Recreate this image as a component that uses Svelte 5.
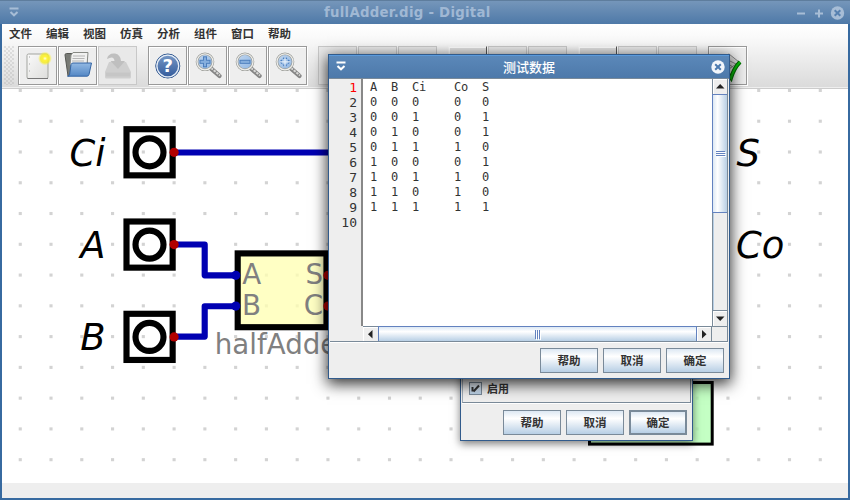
<script>
  const menus = ['文件', '编辑', '视图', '仿真', '分析', '组件', '窗口', '帮助'];
  const groups = [
    [{ icon: 'new' }, { icon: 'open' }, { icon: 'save', off: true }],
    [{ icon: 'help' }, { icon: 'in' }, { icon: 'out' }, { icon: 'fit' }],
    [{ off: true }, { off: true }, { off: true }],
    [{ pressed: true }, { off: true }, { off: true }],
    [{ pressed: true }, { off: true }, { off: true }],
    [{ icon: 'test' }]
  ];
  const rows = [
    'A  B  Ci    Co  S',
    '0  0  0     0   0',
    '0  0  1     0   1',
    '0  1  0     0   1',
    '0  1  1     1   0',
    '1  0  0     0   1',
    '1  0  1     1   0',
    '1  1  0     1   0',
    '1  1  1     1   1',
    ''
  ];
  const step = 30.77;
  const inputs = [
    { y: 152.3, label: 'Ci' },
    { y: 244.6, label: 'A' },
    { y: 336.9, label: 'B' }
  ];
  const dots = [];
  for (let r = 0; r < 13; r++) for (let c = 0; c < 27; c++) dots.push([20.3 + c * step, 90.5 + r * step]);
  const buttons = ['帮助', '取消', '确定'];
</script>

<div class="window">
  <header class="title">
    <svg class="wm left" width="12" height="12" viewBox="0 0 12 12"><path d="M1.5 1.5h9M2.5 5l3.5 3.3L9.500 5" /></svg>
    <span>fullAdder.dig - Digital</span>
    <svg class="wm right" width="50" height="16" viewBox="0 0 50 16">
      <path d="M1 8.500h8M19 8.500h8M23 4.500v8" />
      <circle cx="41.500" cy="8" r="6.700" fill="#a7bdd6" stroke="none" />
      <path d="M38.700 5.200l5.600 5.600m0-5.600l-5.600 5.600" stroke="#5781b0" />
    </svg>
  </header>

  <div class="chrome">
    <nav>{#each menus as m}<span>{m}</span>{/each}</nav>
    <div class="toolbar">
      <div class="grip"></div>
      {#each groups as g}
        <div class="group">
          {#each g as b}
            <div class="tool" class:off={b.off} class:pressed={b.pressed}>
              <svg width="37" height="37" viewBox="0 0 37 37">
                {#if b.icon === 'new'}
                  <rect x="8" y="7" width="21" height="24.500" rx="1.500" fill="url(#paper)" stroke="#a3a5a0" />
                  <path d="M8.500 31.500h20.500" stroke="#777" />
                  <path d="M10.500 9v20" stroke="#ccc" stroke-dasharray="2 5" />
                  <circle cx="26" cy="11.500" r="7" fill="url(#sun)" />
                {:else if b.icon === 'open'}
                  <path d="M6 8q0-1.500 1.500-1.500h6l1.500 2h13v17L9 29z" fill="#777974" stroke="#555753" />
                  <path d="M12 8l2-2.500h15l-1 13H11z" fill="#f1f1f0" stroke="#888a85" />
                  <path d="M14 9h12M13.500 11.500h12M13 14h12" stroke="#b5b5b5" />
                  <path d="M12 17.500q.5-1.500 2-1.500h18.500L30 27.500q-.5 1.700-2 1.700H8.500q2-.7 2.200-2z" fill="url(#folder)" stroke="#3465a4" />
                {:else if b.icon === 'save'}
                  <path d="M6 25l4-10h17l5 10v5q0 1.500-1.500 1.500h-23Q6 31.500 6 30z" fill="#cfcfcf" />
                  <path d="M7 25.500h24v4H7z" fill="#c6c6c6" />
                  <path d="M8 12Q9 6 16 6.500q5.500 1 6 7.500h4l-7 8-7.500-8h4Q15 8 8 12z" fill="#bfbfbf" />
                {:else if b.icon === 'help'}
                  <circle cx="18.800" cy="19" r="12" fill="url(#helpfill)" stroke="#204a87" stroke-width="1" />
                  <circle cx="18.800" cy="19" r="10.900" fill="none" stroke="#e6edf6" stroke-width="1.300" />
                  <text x="18.800" y="25.300" text-anchor="middle">?</text>
                {:else if b.icon === 'test'}
                  <path d="M9 13l11-6 10 8-10 7z" fill="#ddd" stroke="#888" />
                  <path d="M12 13l12 7M15 11l12 6" stroke="#888" />
                  <path d="M16 23l6 8q3-10 9-16" fill="none" stroke="#006c00" stroke-width="4" />
                  <path d="M16 23l6 8q3-10 9-16" fill="none" stroke="#0abf0a" stroke-width="2" />
                {:else if b.icon}
                  <path d="M22 21.500L30.500 28.800" stroke="#858585" stroke-width="4.400" stroke-linecap="round" />
                  <path d="M22 21L31 28.500" stroke="#d9d9d7" stroke-width="2" stroke-dasharray="2.500 1" />
                  <circle cx="16" cy="14.800" r="8" fill="url(#lens)" stroke="#9a9c97" stroke-width="2.600" />
                  <circle cx="16" cy="14.800" r="8" fill="none" stroke="#ededeb" stroke-width="1.300" />
                  {#if b.icon === 'fit'}
                    <path d="M16 8.500l2.500 3.500h-5zM16 21l2.500-3.500h-5zM9.700 14.800l3.500-2.500v5zM22.300 14.800l-3.500-2.500v5z" fill="#4a7fc0" />
                    <path d="M16 9v11.600M10.200 14.800h11.600" stroke="#e4eefa" stroke-width="1.200" />
                  {:else}
                    <path d="M10.500 14.800h11" stroke="#4a7cbb" stroke-width="4" />
                    {#if b.icon === 'in'}<path d="M16 9.300v11" stroke="#4a7cbb" stroke-width="4" />
                      <path d="M16 10.300v9" stroke="#86aedd" stroke-width="2.200" />{/if}
                    <path d="M11.500 14.800h9" stroke="#86aedd" stroke-width="2.200" />
                  {/if}
                {/if}
              </svg>
            </div>
          {/each}
        </div>
      {/each}
    </div>
  </div>

  <main>
    <svg class="scene" width="846" height="394" viewBox="2 89 846 394">
      <defs>
        <linearGradient id="paper" x1="0" y1="0" x2="1" y2="1"><stop offset="0" stop-color="#fafafa" /><stop offset="1" stop-color="#dededc" /></linearGradient>
        <radialGradient id="sun"><stop offset="0" stop-color="#fffde0" /><stop offset=".3" stop-color="#fff23a" /><stop offset=".65" stop-color="#f5ec20" stop-opacity=".8" /><stop offset="1" stop-color="#fff24a" stop-opacity="0" /></radialGradient>
        <linearGradient id="folder" x1="0" y1="0" x2="0" y2="1"><stop offset="0" stop-color="#93b9e3" /><stop offset="1" stop-color="#5387c5" /></linearGradient>
        <linearGradient id="helpfill" x1="0" y1="0" x2="0" y2="1"><stop offset="0" stop-color="#7899c6" /><stop offset="1" stop-color="#31599a" /></linearGradient>
        <linearGradient id="lens" x1="0" y1="0" x2="1" y2="1"><stop offset="0" stop-color="#c3d8f0" /><stop offset="1" stop-color="#8db4e2" /></linearGradient>
      </defs>
      <g fill="#d3d3d3">
        {#each dots as [x, y]}<rect x={x - 1.6} y={y - 1.6} width="3.100" height="3.100" />{/each}
      </g>
      <g fill="none" stroke="#0000b2" stroke-width="6.150" stroke-linejoin="round" stroke-linecap="round">
        <path d="M174 152.500H340" />
        <path d="M174 244.500H204.700V275.300H236" />
        <path d="M174 336.600H204.700V306.200H236" />
      </g>
      {#each inputs as p}
        <rect x="126.500" y={p.y - 23.1} width="46.150" height="46.150" fill="none" stroke="#000" stroke-width="6.150" />
        <circle cx="149.500" cy={p.y} r="14" fill="none" stroke="#000" stroke-width="6.150" />
        <circle cx="174.100" cy={p.y} r="4.600" fill="#b20000" />
        <text class="pin" x="105.600" y={p.y + 13.5} text-anchor="end">{p.label}</text>
      {/each}
      <text class="pin" x="736.400" y="165.800">S</text>
      <text class="pin" x="736" y="258.100">Co</text>
      <rect x="237.700" y="253.400" width="88.800" height="73.800" fill="#ffffb4" fill-opacity=".78" stroke="#000" stroke-width="6.150" />
      <circle cx="235.800" cy="275.300" r="4.600" fill="#0000b2" />
      <circle cx="235.800" cy="306.100" r="4.600" fill="#0000b2" />
      <circle cx="328" cy="275.300" r="4.600" fill="#b20000" />
      <circle cx="328" cy="306.100" r="4.600" fill="#b20000" />
      <g class="block">
        <text x="242.300" y="283.900">A</text>
        <text x="242" y="314.900">B</text>
        <text x="323" y="283.900" text-anchor="end">S</text>
        <text x="323" y="314.900" text-anchor="end">C</text>
        <text x="214.800" y="353.800">halfAdder</text>
      </g>
      <rect x="589.500" y="382.500" width="122.700" height="61.600" fill="#b4ffb4" fill-opacity=".78" stroke="#000" stroke-width="3" />
    </svg>
  </main>
  <footer></footer>
</div>

<section class="dialog back">
  <div class="panel">
    <span class="check"><svg width="11" height="11" viewBox="0 0 11 11"><path d="M2.500 4v4.500M3.500 8.500L9 2.500" stroke="#333" stroke-width="2" fill="none" /></svg></span>
    <span>启用</span>
  </div>
  <div class="actions">{#each buttons as b, i}<button class:focus={i === 2}>{b}</button>{/each}</div>
</section>

<section class="dialog front">
  <header class="dtitle">
    <svg class="wm bright left" width="12" height="12" viewBox="0 0 12 12"><path d="M1.500 1.500h9M2.500 5l3.500 3.300L9.500 5" /></svg>
    <span>测试数据</span>
    <svg class="wm right" width="14" height="14" viewBox="0 0 14 14">
      <circle cx="7" cy="7" r="6.700" fill="#f2f6fb" stroke="none" />
      <path d="M4.200 4.200l5.600 5.600m0-5.600L4.200 9.800" stroke="#4d7bb0" />
    </svg>
  </header>
  <div class="editor">
    <div class="gutter">{#each rows as _, i}<div class:current={i === 0}>{i + 1}</div>{/each}</div>
    <div class="bar"></div>
    <div class="pane">
      <div class="upper">
        <div class="code">{#each rows as r}<div>{r}</div>{/each}</div>
        <div class="vscroll">
          <div class="arrow"><svg width="9" height="5" viewBox="0 0 9 5"><path d="M0 4.500h8.500L4.200 0z" /></svg></div>
          <div class="vthumb"><i></i><i></i><i></i></div>
          <div class="vtrack"></div>
          <div class="arrow down"><svg width="9" height="5" viewBox="0 0 9 5"><path d="M0 .5h8.500L4.200 5z" /></svg></div>
        </div>
      </div>
      <div class="hscroll">
        <div class="harrow"><svg width="5" height="9" viewBox="0 0 5 9"><path d="M4.500 0v8.500L0 4.200z" /></svg></div>
        <div class="hthumb"><i></i><i></i><i></i></div>
        <div class="harrow end"><svg width="5" height="9" viewBox="0 0 5 9"><path d="M0 0v8.500l4.500-4.300z" /></svg></div>
        <div class="corner"></div>
      </div>
    </div>
  </div>
  <div class="actions">{#each buttons as b}<button>{b}</button>{/each}</div>
</section>

<style>
  :global(body) { margin: 0; overflow: hidden; }
  .window, .dialog { box-sizing: border-box; font: bold 11.500px/14px "Noto Sans CJK SC", sans-serif; color: #333; }
  .window { position: relative; width: 850px; height: 500px; display: flex; flex-direction: column; border: solid #376aa0; border-width: 0 2px 2px; }
  .title { flex: 0 0 24px; margin: 0 -2px; box-sizing: border-box; display: flex; align-items: center; border-top: 1px solid #5e7d9d; background: linear-gradient(#7596ba, #4e79a8); color: #a0b8d4; font: bold 13.300px/22px "DejaVu Sans", sans-serif; letter-spacing: .27px; }
  .title span { margin-left: 304px; white-space: nowrap; }
  .wm { fill: none; stroke: #a7bdd6; stroke-width: 2; }
  .wm.bright { stroke: #fff; }
  .title .left { margin-left: 8px; width: 12px; flex: none; }
  .title .right { margin-left: auto; margin-right: 4px; }
  .chrome { flex: 0 0 65px; box-sizing: border-box; background: linear-gradient(#fff, #fafafa 20%, #dadada); border-bottom: 1px solid #ccc; box-shadow: inset 0 -1px #eee; }
  nav { display: flex; height: 22px; padding-left: 7px; align-items: center; }
  nav span { width: 37px; line-height: 18px; padding-bottom: 4px; }
  .toolbar { display: flex; height: 39px; }
  .grip { width: 10px; margin: 0 4px 0 2px; background-image: radial-gradient(circle at 1px 1px, #999 .4px, transparent .8px), radial-gradient(circle at 3px 3px, #999 .4px, transparent .8px); background-size: 4px 4px; }
  .group { display: flex; gap: 1px; margin-right: 11px; }
  .tool { box-sizing: border-box; width: 39px; height: 39px; border: 1px solid #999; background: #eee; box-shadow: 1px 1px #fff, inset 1px 1px #fff; }
  .tool svg { display: block; }
  .tool.off { border-color: #c8c8c8; box-shadow: none; background: #e9e9e9; }
  .tool.pressed { border-color: #f7f7f7 #555 #f7f7f7 #f7f7f7; background: #e2e2e2; }
  .tool text { font: bold 18px "DejaVu Sans", sans-serif; fill: #fff; }
  main { flex: 1; min-height: 0; background: #fff; }
  .scene { display: block; }
  .pin { font: italic 36.900px "DejaVu Sans", sans-serif; fill: #000; }
  .block text { font: 27.700px "DejaVu Sans", sans-serif; fill: #808080; }
  footer { flex: 0 0 15px; background: #eee; }

  .dialog { position: absolute; display: flex; flex-direction: column; background: #eee; border: 1px solid #315b8c; }
  .back { left: 460px; top: 300px; width: 233px; height: 141px; box-shadow: 0 3px 8px rgba(0, 0, 0, .5); }
  .panel { flex: 0 0 102px; box-sizing: border-box; margin: 0 1px; padding: 0 0 7px 6px; border: 1px solid #7a8a99; border-top: 0; border-left-color: #a0acb8; box-shadow: 0 1px #fff; display: flex; align-items: flex-end; gap: 5px; font-size: 11px; }
  .check { box-sizing: border-box; width: 13px; height: 13px; border: 1px solid #7a8a99; background: linear-gradient(#eef4fa, #b8cfe5); }
  .check svg { display: block; }
  .actions { display: flex; justify-content: flex-end; gap: 5px; padding: 6px 5px 0; }
  button { box-sizing: border-box; width: 58px; height: 25px; padding: 0 0 1px; border: 1px solid #7a8a99; border-radius: 0; background: linear-gradient(#dde8f3, #fff 32%, #b8cfe5); font: inherit; color: #333; }
  button.focus { border-width: 2px; }
  .back .actions { padding-top: 7px; }
  .front { left: 328px; top: 54px; width: 402px; height: 325px; box-shadow: 0 4px 14px 1px rgba(0, 0, 0, .8); }
  .dtitle { flex: 0 0 24px; box-sizing: border-box; display: flex; align-items: center; justify-content: space-between; padding: 0 4px 0 6px; border-top: 1px solid #5b9adb; border-bottom: 1px solid #7a8a99; background: linear-gradient(#5b88b9, #4d79aa); color: #fff; font-size: 13px; font-weight: 500; }
  .editor { height: 263px; flex: none; box-sizing: border-box; display: flex; margin: 0 1px; border-right: 1px solid #7a8a99; border-bottom: 1px solid #7a8a99; box-shadow: 0 1px #fff; }
  .gutter { width: 31px; box-sizing: border-box; padding: 1px 4px 0 0; background: #eee; text-align: right; font: 13px/15px "DejaVu Sans Mono", monospace; color: #333; }
  .gutter .current { color: #f00; }
  .bar { width: 2px; height: 247px; background: #888; }
  .pane { flex: 1; min-width: 0; display: flex; flex-direction: column; }
  .upper { height: 247px; display: flex; background: #fff; }
  .code { flex: 1; padding: 1px 0 0 7px; white-space: pre; font: 12px/15px "DejaVu Sans Mono", monospace; letter-spacing: -.224px; color: #333; }
  .code div { height: 15px; }
  .vscroll { width: 15px; box-sizing: border-box; border-left: 1px solid #7a8a99; display: flex; flex-direction: column; background: #eee; }
  .arrow { height: 15px; display: flex; align-items: center; justify-content: center; box-shadow: inset 1px 1px #fff; }
  .arrow svg, .harrow svg { fill: #222; }
  .arrow.down { border-top: 1px solid #7a8a99; }
  .vthumb { height: 119px; box-sizing: border-box; margin-left: -1px; border: solid #6382bf; border-width: 1px 0 1px 1px; background: linear-gradient(90deg, #dce8f4, #fff 33%, #b8cfe5); display: flex; flex-direction: column; align-items: center; justify-content: center; gap: 1px; }
  .vthumb i { width: 9px; height: 1px; background: #6382bf; box-shadow: 1px 1px #fff; }
  .vtrack { flex: 1; box-shadow: inset 1px 0 #b8cfe5; }
  .hscroll { flex: 1; display: flex; box-sizing: border-box; border-top: 1px solid #7a8a99; background: #eee; }
  .harrow { width: 15px; display: flex; align-items: center; justify-content: center; box-shadow: inset 1px 1px #fff; }
  .harrow.end { width: 14px; border-right: 1px solid #7a8a99; }
  .hthumb { flex: 1; margin-top: -1px; border: solid #6382bf; border-width: 1px 1px 0; background: linear-gradient(#dce8f4, #fff 33%, #b8cfe5); display: flex; align-items: center; justify-content: center; gap: 1px; }
  .hthumb i { width: 1px; height: 9px; background: #6382bf; box-shadow: 1px 1px #fff; }
  .corner { width: 15px; }
</style>
